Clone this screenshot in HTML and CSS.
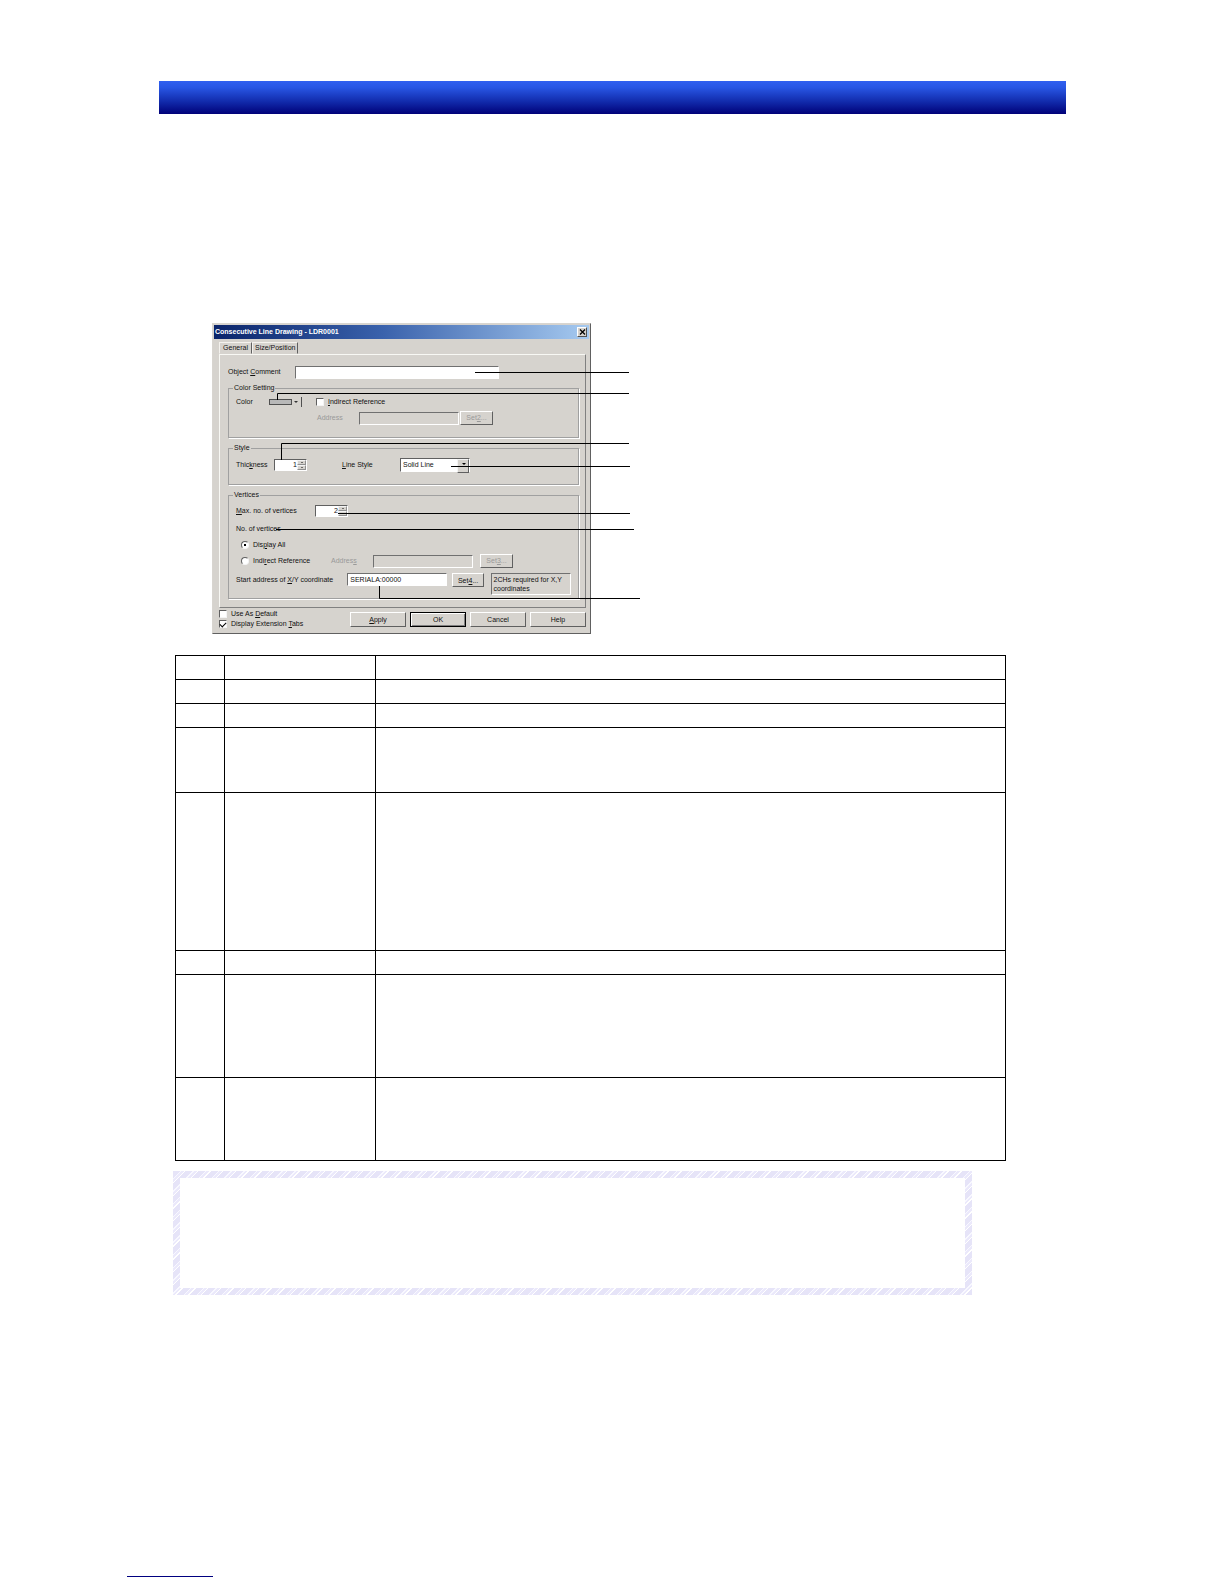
FILE: index.html
```html
<!DOCTYPE html>
<html lang="en">
<head>
<meta charset="utf-8">
<title>Consecutive Line Drawing</title>
<link rel="stylesheet" href="styles.css">
</head>
<body>
<main class="page">
  <header class="banner"></header>

  <figure class="figure">
    <form class="dialog">
      <div class="titlebar">
        <span>Consecutive Line Drawing - LDR0001</span>
        <button type="button" class="close" aria-label="Close">
          <svg width="7" height="6" viewBox="0 0 7 6"><path d="M1 0.5 L6 5.5 M6 0.5 L1 5.5" stroke="#000" stroke-width="1.3"/></svg>
        </button>
      </div>

      <div class="tabs">
        <button type="button" class="tab tab-active">General</button>
        <button type="button" class="tab">Size/Position</button>
      </div>

      <div class="panel">
        <div class="row">
          <label class="label-comment" for="comment">Object <u>C</u>omment</label>
          <input class="field field-comment" id="comment" type="text">
        </div>

        <fieldset class="group group-color">
          <legend>Color Setting</legend>
          <div class="row row-short">
            <label class="label-color" for="color">Color</label>
            <button type="button" class="color-button" id="color"><span class="swatch"></span><span class="caret"></span></button>
            <label class="choice choice-color"><input type="checkbox"><span><u>I</u>ndirect Reference</span></label>
          </div>
          <div class="row row-address">
            <label class="label-address dim" for="color-address">Address</label>
            <input class="field field-address" id="color-address" type="text" disabled>
            <button type="button" class="button button-set" disabled>Set<u>2</u>...</button>
          </div>
        </fieldset>

        <fieldset class="group group-style">
          <legend>Style</legend>
          <div class="row">
            <label class="label-thickness" for="thickness">Thic<u>k</u>ness</label>
            <span class="spinner">
              <input id="thickness" type="text" value="1">
              <span class="steps"><button type="button" class="step step-up" aria-label="Increase"></button><button type="button" class="step step-down" aria-label="Decrease"></button></span>
            </span>
            <label class="label-line" for="line-style"><u>L</u>ine Style</label>
            <span class="dropdown">
              <select id="line-style"><option>Solid Line</option></select>
            </span>
          </div>
        </fieldset>

        <fieldset class="group group-vertices">
          <legend>Vertices</legend>
          <div class="row">
            <label class="label-max" for="max-vertices"><u>M</u>ax. no. of vertices</label>
            <span class="spinner">
              <input id="max-vertices" type="text" value="2">
              <span class="steps"><button type="button" class="step step-up" aria-label="Increase"></button><button type="button" class="step step-down" aria-label="Decrease"></button></span>
            </span>
          </div>
          <div class="row row-short">No. of vertices</div>
          <div class="row row-radio">
            <label class="choice"><input type="radio" name="vertices" checked><span>Dis<u>p</u>lay All</span></label>
          </div>
          <div class="row row-indirect">
            <label class="choice choice-indirect"><input type="radio" name="vertices"><span>Indi<u>r</u>ect Reference</span></label>
            <label class="label-address dim" for="vertex-address">Addres<u>s</u></label>
            <input class="field field-address" id="vertex-address" type="text" disabled>
            <button type="button" class="button button-set button-vertex" disabled>Set<u>3</u>...</button>
          </div>
          <div class="row row-start">
            <label class="label-start" for="start-address">Start address of <u>X</u>/Y coordinate</label>
            <input class="field field-address" id="start-address" type="text" value="SERIALA:00000">
            <button type="button" class="button button-set button-start">Set<u>4</u>...</button>
            <div class="hint">2CHs required for X,Y coordinates</div>
          </div>
        </fieldset>
      </div>

      <div class="actions">
        <div class="options">
          <label class="choice"><input type="checkbox"><span>Use As <u>D</u>efault</span></label>
          <label class="choice"><input type="checkbox" checked><span>Display Extension <u>T</u>abs</span></label>
        </div>
        <div class="buttons">
          <button type="button" class="button"><u>A</u>pply</button>
          <button type="button" class="button button-default">OK</button>
          <button type="button" class="button">Cancel</button>
          <button type="button" class="button">Help</button>
        </div>
      </div>
    </form>

    <svg class="leaders" width="430" height="312" viewBox="0 0 430 312" aria-hidden="true">
      <path d="M263 49.5H417 M65.5 77V70.5H417 M69.5 137V120.5H417 M239 143.5H418 M126 190.5H418 M64 206.5H422 M167.5 263V275.5H428"/>
    </svg>
  </figure>

  <div class="table-wrap">
    <table class="settings">
      <colgroup><col class="col-number"><col class="col-name"><col></colgroup>
      <tbody>
        <tr class="h-line"><td></td><td></td><td></td></tr>
        <tr class="h-line"><td></td><td></td><td></td></tr>
        <tr class="h-line"><td></td><td></td><td></td></tr>
        <tr class="h-three"><td></td><td></td><td></td></tr>
        <tr class="h-eight"><td></td><td></td><td></td></tr>
        <tr class="h-line"><td></td><td></td><td></td></tr>
        <tr class="h-five"><td></td><td></td><td></td></tr>
        <tr class="h-four"><td></td><td></td><td></td></tr>
      </tbody>
    </table>
  </div>

  <aside class="note"><div class="note-body"></div></aside>
</main>
<footer class="footer"><a class="footer-link" href="#" aria-label="Contents"></a></footer>
</body>
</html>
```

FILE: styles.css
```css
* { box-sizing: border-box; }

body {
  margin: 0;
  background: #fff;
  color: #111;
  font-family: "Liberation Sans", Arial, sans-serif;
}

.page { padding: 81px 158px 0 159px; }

.banner {
  height: 33px;
  background: linear-gradient(#3060f0, #2856e4 20%, #1028a8 65%, #000078);
}

/* Dialog figure */
.figure {
  position: relative;
  width: 379px;
  margin: 209px 0 0 53px;
}

.leaders {
  position: absolute;
  top: 0;
  left: 0;
  pointer-events: none;
}
.leaders path { fill: none; stroke: #000; stroke-width: 1; }

.dialog {
  padding: 1px;
  border: 1px solid;
  border-color: #d8d5d0 #606060 #606060 #d8d5d0;
  background: #d6d3ce;
  font-size: 7px;
  line-height: 10px;
  white-space: nowrap;
}
.dialog button,
.dialog input,
.dialog select {
  margin: 0;
  padding: 0;
  border-radius: 0;
  color: inherit;
  font: inherit;
}
.dialog button:disabled { color: #999; }

.titlebar {
  display: flex;
  align-items: center;
  justify-content: space-between;
  height: 14px;
  padding: 0 2px 0 1px;
  background: linear-gradient(90deg, #0a246a, #3a62ac 45%, #a6caf0);
  color: #fff;
  font-weight: bold;
}
.close {
  display: flex;
  align-items: center;
  justify-content: center;
  width: 10px;
  height: 10px;
  border: 1px solid;
  border-color: #fff #505050 #505050 #fff;
  background: #d6d3ce;
}

.tabs { display: flex; height: 15px; padding: 3px 0 0 5px; }
.tab {
  height: 12px;
  border: 1px solid;
  border-color: #f4f2ee #606060 transparent #f4f2ee;
  background: #d6d3ce;
}
.dialog .tab { padding: 0 2px; }
.tab-active { width: 33px; }

.panel {
  margin: 0 3px 0 5px;
  padding: 10px 6px 8px 8px;
  border: 1px solid;
  border-color: #f8f8f4 #808080 #808080 #f8f8f4;
}

.row { display: flex; align-items: center; height: 14px; }
.row-short { height: 12px; }
.dim { color: #999; }

.group {
  min-width: 0;
  margin: 5px 0 0;
  padding: 3px 7px 12px;
  border: 1px solid #a0a0a0;
  box-shadow: 1px 1px 0 #fff;
}
.group-color { margin-top: 4px; }
.group-style { padding-top: 5px; }
.group-vertices { padding-top: 4px; padding-bottom: 3px; }
.group legend { margin-left: -3px; padding: 0 1px; }

.field {
  height: 13px;
  border: 1px solid;
  border-color: #707070 #fff #fff #707070;
  background: #fff;
}
.dialog .field { padding: 0 2px; }
.field:disabled { background: #d6d3ce; }
.field-comment { width: 204px; }
.field-address { width: 100px; }

.label-comment { width: 67px; }
.label-color { width: 33px; }
.label-address { width: 42px; }
.label-thickness { width: 38px; }
.label-line { width: 58px; margin-left: 35px; }
.label-max { width: 79px; }
.label-start { width: 112px; }

.color-button {
  display: flex;
  align-items: center;
  justify-content: space-between;
  width: 33px;
  height: 10px;
  border: 0;
  border-right: 1px solid #505050;
  background: none;
}
.swatch { width: 23px; height: 6px; border: 1px solid #505050; background: #b8b8b8; }
.caret { margin-right: 3px; border: 2px solid transparent; border-top-color: #333; border-bottom: 0; }

.choice { display: flex; align-items: center; gap: 4px; }
.choice-color { margin-left: 14px; }
.choice-indirect { width: 90px; }
.choice input {
  display: flex;
  justify-content: center;
  flex: none;
  width: 8px;
  height: 8px;
  appearance: none;
  border: 1px solid;
  border-color: #606060 #f4f4f4 #f4f4f4 #606060;
  background: #fff;
}
.dialog .choice input[type="radio"] { border-radius: 50%; }
.choice input[type="radio"]:checked::after {
  content: "";
  width: 2px;
  height: 2px;
  margin-top: 2px;
  background: #000;
}
.choice input[type="checkbox"]:checked::after {
  content: "";
  width: 5px;
  height: 3px;
  margin-top: 1px;
  border: solid #000;
  border-width: 0 0 1px 1px;
  transform: rotate(-45deg);
}

.row-address { margin-top: 3px; padding-left: 81px; }
.button {
  border: 1px solid;
  border-color: #fff #606060 #606060 #fff;
  background: #d6d3ce;
  text-align: center;
}
.button-set { width: 33px; height: 14px; }
.dialog .button-set { margin-left: 1px; }

.spinner {
  display: flex;
  width: 33px;
  height: 12px;
  border: 1px solid;
  border-color: #606060 #fff #fff #606060;
  background: #fff;
}
.spinner input {
  width: 22px;
  border: 0;
  background: none;
  text-align: right;
}
.steps { display: flex; flex-direction: column; width: 9px; }
.step {
  display: flex;
  align-items: center;
  justify-content: center;
  flex: 1;
  border: 1px solid;
  border-color: #f4f4f4 #909090 #909090 #f4f4f4;
  background: #d6d3ce;
}
.step::after { content: ""; border: 1px solid transparent; }
.step-up::after { border-top: 0; border-bottom-color: #000; }
.step-down::after { border-bottom: 0; border-top-color: #000; }

.dropdown {
  position: relative;
  width: 70px;
  height: 14px;
}
.dropdown select {
  display: block;
  width: 100%;
  height: 100%;
  appearance: none;
  border: 1px solid;
  border-color: #606060 #fff #fff #606060;
  background: #fff;
}
.dialog .dropdown select { padding: 0 2px; }
.dropdown::before {
  content: "";
  position: absolute;
  top: 1px;
  right: 1px;
  width: 10px;
  height: 12px;
  border: 1px solid;
  border-color: #f4f4f4 #606060 #606060 #f4f4f4;
  background: #d6d3ce;
}
.dropdown::after {
  content: "";
  position: absolute;
  top: 5px;
  right: 4px;
  border: 2px solid transparent;
  border-top-color: #000;
  border-bottom: 0;
}

.group-vertices .row + .row { margin-top: 5px; }
.row-radio { height: 9px; }
.row-radio,
.row-indirect { padding-left: 5px; }
.dialog .button-vertex { margin-left: 7px; }
.row-start { height: 22px; align-items: flex-start; line-height: 14px; }
.dialog .button-start { margin-left: 5px; }
.hint {
  width: 80px;
  height: 22px;
  margin-left: 7px;
  padding: 1px;
  border: 1px solid;
  border-color: #707070 #fff #fff #707070;
  line-height: 9px;
  white-space: normal;
}

.actions {
  display: flex;
  justify-content: space-between;
  padding: 1px 3px 3px 5px;
}
.options { display: flex; flex-direction: column; }
.buttons { display: flex; gap: 4px; padding-top: 3px; }
.buttons .button { width: 56px; height: 15px; }
.buttons .button-default { border-color: #000; box-shadow: inset 1px 1px 0 #fff, inset -1px -1px 0 #808080; }

/* Settings table */
.table-wrap { margin: 21px 60px 0 16px; }
.settings { width: 100%; border-collapse: collapse; table-layout: fixed; }
.settings td { padding: 0; border: 1px solid #000; }
.col-number { width: 49px; }
.col-name { width: 151px; }
.h-line { height: 24px; }
.h-three { height: 65px; }
.h-eight { height: 158px; }
.h-five { height: 103px; }
.h-four { height: 83px; }

/* Note with hatched frame */
.note {
  margin: 10px 94px 0 14px;
  padding: 7px;
  background: repeating-linear-gradient(135deg, #e6e4f8 0 5px, #f8f8ff 5px 6px, #ebe9fb 6px 8px, #fff 8px 9px);
}
.note-body { height: 110px; background: #fff; }

.footer { padding: 281px 0 8px 127px; }
.footer-link { display: block; width: 86px; border-bottom: 1px solid #000080; }
```
